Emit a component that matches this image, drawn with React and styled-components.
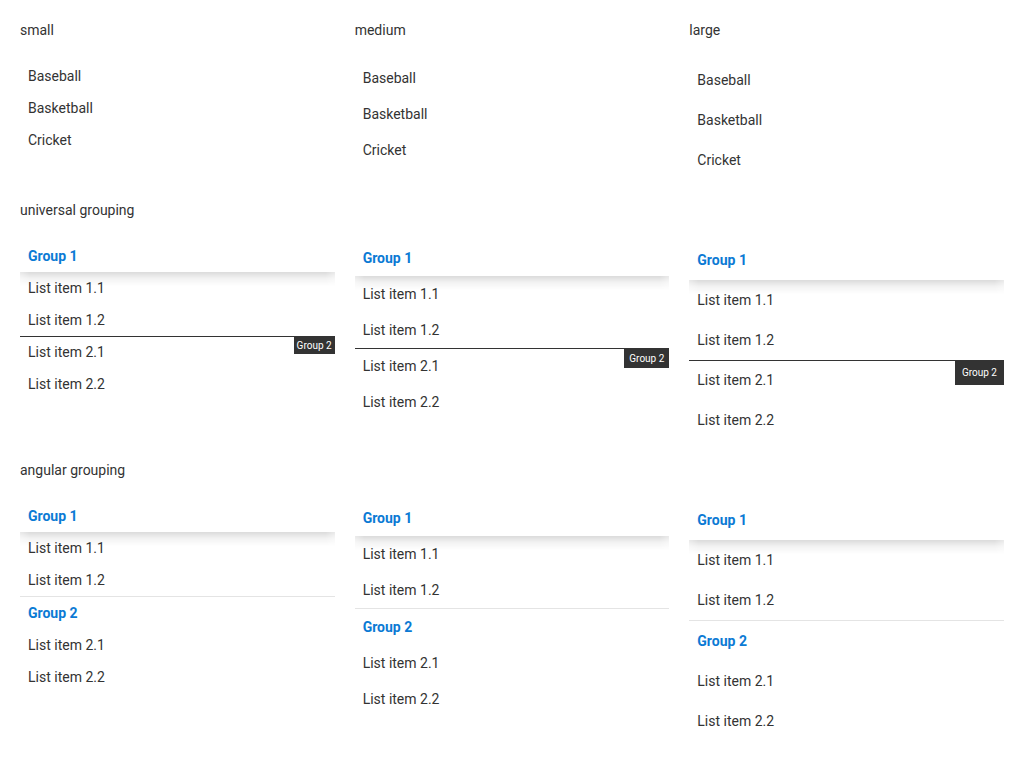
import styled, { createGlobalStyle } from "styled-components";

const SIZES = {
  small: { row: 32, tagH: 18, tagPad: 3 },
  medium: { row: 36, tagH: 20, tagPad: 5 },
  large: { row: 40, tagH: 25, tagPad: 7 },
};

const ORDER = ["small", "medium", "large"];
const SPORTS = ["Baseball", "Basketball", "Cricket"];
const GROUPS = [
  { title: "Group 1", items: ["List item 1.1", "List item 1.2"] },
  { title: "Group 2", items: ["List item 2.1", "List item 2.2"] },
];

const GlobalStyle = createGlobalStyle`
  body {
    margin: 0;
    background: #fff;
    font-family: Roboto, "Liberation Sans", sans-serif;
    color: #333;
  }
`;

function SimpleList({ size }) {
  return (
    <List>
      {SPORTS.map((s) => (
        <Item key={s} $h={SIZES[size].row}>
          {s}
        </Item>
      ))}
    </List>
  );
}

function UniversalList({ size }) {
  const cfg = SIZES[size];
  return (
    <List>
      <Header $h={cfg.row} $stuck>
        {GROUPS[0].title}
      </Header>
      {GROUPS[0].items.map((t) => (
        <Item key={t} $h={cfg.row}>
          {t}
        </Item>
      ))}
      <StickyDivider>
        <Tag $h={cfg.tagH} $pad={cfg.tagPad}>
          {GROUPS[1].title}
        </Tag>
      </StickyDivider>
      {GROUPS[1].items.map((t) => (
        <Item key={t} $h={cfg.row}>
          {t}
        </Item>
      ))}
    </List>
  );
}

function AngularList({ size }) {
  const cfg = SIZES[size];
  return (
    <List>
      {GROUPS.map((g, i) => (
        <Group key={g.title}>
          <Header $h={cfg.row} $stuck={i === 0} $divided={i > 0}>
            {g.title}
          </Header>
          {g.items.map((t) => (
            <Item key={t} $h={cfg.row}>
              {t}
            </Item>
          ))}
        </Group>
      ))}
    </List>
  );
}

export default function App() {
  return (
    <>
      <GlobalStyle />
      <Page>
        {ORDER.map((s) => (
          <Label key={s}>{s}</Label>
        ))}
        {ORDER.map((s) => (
          <SimpleList key={s} size={s} />
        ))}

        <Label $wide>universal grouping</Label>
        {ORDER.map((s) => (
          <UniversalList key={s} size={s} />
        ))}

        <Label $wide>angular grouping</Label>
        {ORDER.map((s) => (
          <AngularList key={s} size={s} />
        ))}
      </Page>
    </>
  );
}

const Page = styled.div`
  display: grid;
  grid-template-columns: repeat(3, 1fr);
  column-gap: 20px;
  row-gap: 12px;
  padding: 20px;
  align-items: start;
`;

const Label = styled.div`
  grid-column: ${(p) => (p.$wide ? "1 / -1" : "auto")};
  font-size: 14px;
  line-height: 20px;
  color: #333;
`;

const List = styled.div`
  display: flex;
  flex-direction: column;
  padding: 8px 0;
`;

const Group = styled.div`
  display: flex;
  flex-direction: column;
`;

const Item = styled.div`
  height: ${(p) => p.$h}px;
  display: flex;
  align-items: center;
  padding: 0 8px;
  font-size: 14px;
  color: #333;
`;

const Header = styled(Item)`
  position: relative;
  z-index: 1;
  background: #fff;
  font-weight: 700;
  color: #0b7ad4;
  border-top: ${(p) => (p.$divided ? "1px solid #e4e4e4" : "none")};

  &::after {
    content: "";
    display: ${(p) => (p.$stuck ? "block" : "none")};
    position: absolute;
    left: 0;
    right: 0;
    top: 100%;
    height: 14px;
    background: linear-gradient(
      rgba(0, 0, 0, 0.14),
      rgba(0, 0, 0, 0.05) 45%,
      rgba(0, 0, 0, 0)
    );
    -webkit-mask-image: linear-gradient(
      to right,
      rgba(0, 0, 0, 0.6),
      #000 3%,
      #000 97%,
      rgba(0, 0, 0, 0.6)
    );
    pointer-events: none;
  }
`;

const StickyDivider = styled.div`
  position: relative;
  height: 0;

  &::before {
    content: "";
    position: absolute;
    left: 0;
    right: 0;
    top: 0;
    height: 1px;
    background: #333;
  }
`;

const Tag = styled.div`
  position: absolute;
  top: 0;
  right: 0;
  height: ${(p) => p.$h}px;
  padding: 0 ${(p) => p.$pad}px;
  display: flex;
  align-items: center;
  background: #333;
  color: #fff;
  font-size: 10px;
`;
